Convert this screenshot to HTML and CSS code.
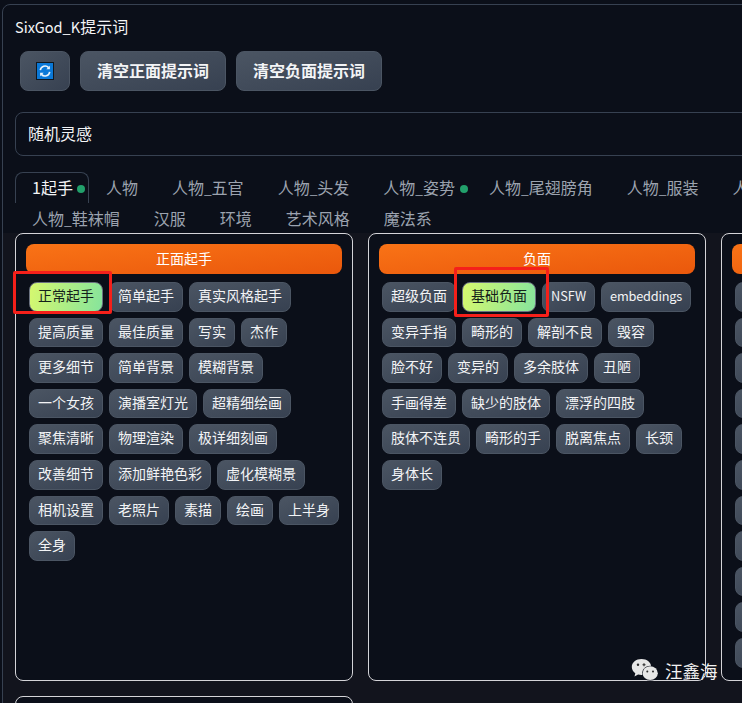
FILE: index.html
```html
<!DOCTYPE html>
<html lang="zh-CN">
<head>
<meta charset="utf-8">
<title>SixGod_K提示词</title>
<link rel="stylesheet" href="styles.css">
</head>
<body>
<div class="panel">
  <div class="title"><span class="latin">SixGod_K</span>提示词</div>
  <div class="toolbar">
    <button class="btn btn-icon" type="button">
      <svg class="refresh" width="18" height="18" viewBox="0 0 18 18" aria-hidden="true">
        <rect x="0.5" y="0.5" width="17" height="17" fill="#0a78d7" stroke="#101820"/>
        <path d="M4.3 8.2A4.8 4.8 0 0 1 12.6 5.6" fill="none" stroke="#eaf4fc" stroke-width="1.6"/>
        <path d="M13.7 9.8A4.8 4.8 0 0 1 5.4 12.4" fill="none" stroke="#eaf4fc" stroke-width="1.6"/>
        <path d="M13.9 3.7V7.2H10.4Z" fill="#eaf4fc"/>
        <path d="M4.1 14.3V10.8H7.6Z" fill="#eaf4fc"/>
      </svg>
    </button>
    <button class="btn" type="button">清空正面提示词</button>
    <button class="btn" type="button">清空负面提示词</button>
  </div>
  <div class="inspire">随机灵感</div>
  <div class="tabs">
    <div class="tab-row">
      <div class="tab tab-active">1起手<span class="dot"></span></div>
      <div class="tab">人物</div>
      <div class="tab">人物<span class="latin">_</span>五官</div>
      <div class="tab">人物<span class="latin">_</span>头发</div>
      <div class="tab">人物<span class="latin">_</span>姿势<span class="dot"></span></div>
      <div class="tab">人物<span class="latin">_</span>尾翅膀角</div>
      <div class="tab">人物<span class="latin">_</span>服装</div>
      <div class="tab">人物<span class="latin">_</span>饰品</div>
    </div>
    <div class="tab-row tab-row-last">
      <div class="tab">人物<span class="latin">_</span>鞋袜帽</div>
      <div class="tab">汉服</div>
      <div class="tab">环境</div>
      <div class="tab">艺术风格</div>
      <div class="tab">魔法系</div>
    </div>
  </div>
  <div class="tab-body">
    <div class="col">
      <div class="col-head">正面起手</div>
      <div class="chips">
        <span class="chip chip-on">正常起手</span><span class="chip">简单起手</span><span class="chip">真实风格起手</span>
        <span class="chip">提高质量</span><span class="chip">最佳质量</span><span class="chip">写实</span><span class="chip">杰作</span>
        <span class="chip">更多细节</span><span class="chip">简单背景</span><span class="chip">模糊背景</span>
        <span class="chip">一个女孩</span><span class="chip">演播室灯光</span><span class="chip">超精细绘画</span>
        <span class="chip">聚焦清晰</span><span class="chip">物理渲染</span><span class="chip">极详细刻画</span>
        <span class="chip">改善细节</span><span class="chip">添加鲜艳色彩</span><span class="chip">虚化模糊景</span>
        <span class="chip">相机设置</span><span class="chip">老照片</span><span class="chip">素描</span><span class="chip">绘画</span><span class="chip">上半身</span>
        <span class="chip">全身</span>
      </div>
    </div>
    <div class="col">
      <div class="col-head">负面</div>
      <div class="chips">
        <span class="chip">超级负面</span><span class="chip chip-on">基础负面</span><span class="chip"><span class="latin">NSFW</span></span><span class="chip"><span class="latin latin-tight">embeddings</span></span>
        <span class="chip">变异手指</span><span class="chip">畸形的</span><span class="chip">解剖不良</span><span class="chip">毁容</span>
        <span class="chip">脸不好</span><span class="chip">变异的</span><span class="chip">多余肢体</span><span class="chip">丑陋</span>
        <span class="chip">手画得差</span><span class="chip">缺少的肢体</span><span class="chip">漂浮的四肢</span>
        <span class="chip">肢体不连贯</span><span class="chip">畸形的手</span><span class="chip">脱离焦点</span><span class="chip">长颈</span>
        <span class="chip">身体长</span>
      </div>
    </div>
    <div class="col">
      <div class="col-head">其他</div>
      <div class="chips chips-stack">
        <span class="chip">提示词</span><span class="chip">提示词</span><span class="chip">提示词</span><span class="chip">提示词</span>
        <span class="chip">提示词</span><span class="chip">提示词</span><span class="chip">提示词</span><span class="chip">提示词</span>
        <span class="chip">提示词</span><span class="chip">提示词</span><span class="chip">提示词</span>
      </div>
    </div>
    <div class="col"></div>
  </div>
</div>

<div class="mark mark-a"></div>
<div class="mark mark-b"></div>

<div class="watermark">
  <svg width="28" height="24" viewBox="0 0 28 24" aria-hidden="true">
    <path d="M10.5 1C5 1 .8 4.500.8 9c0 2.600 1.400 4.700 3.500 6.200L3.500 18.500l3.600-1.900c1.100.3 2.200.5 3.400.5 5.500 0 9.700-3.600 9.700-8.100S16 1 10.500 1z" fill="#e6e6e6"/>
    <ellipse cx="19.200" cy="15.200" rx="8.200" ry="7.400" fill="#0b0f19"/>
    <ellipse cx="19.200" cy="15.200" rx="7.600" ry="6.900" fill="#e6e6e6"/>
    <circle cx="7" cy="6.800" r="1.200" fill="#2b2b2b"/>
    <path d="M13 5.300v3M11.500 6.800h3" stroke="#2b2b2b" stroke-width="1.100"/>
    <circle cx="16.300" cy="13.500" r="1" fill="#2b2b2b"/>
    <circle cx="22" cy="13.500" r="1" fill="#2b2b2b"/>
  </svg>
  <span class="watermark-name">汪鑫海</span>
</div>
</body>
</html>
```

FILE: styles.css
```css
* { box-sizing: border-box; }

html, body {
  margin: 0;
  height: 703px;
  overflow: hidden;
  background: #0b0f19;
}

body {
  position: relative;
  width: 742px;
  font-family: "Noto Sans CJK SC", sans-serif;
  font-size: 16px;
  line-height: 24px;
  color: #f3f4f6;
}

.latin {
  font-size: 0.91em;
  line-height: 1;
}

.latin-tight { letter-spacing: -0.2px; }

.panel {
  width: 1200px;
  margin: 4px 0 0 2px;
  padding: 10px 0 0 12px;
  border: 1px solid #374151;
  border-radius: 8px;
  background: #0b0f19;
}

.title {
  height: 24px;
  line-height: 22px;
}

.toolbar {
  display: flex;
  gap: 10px;
  margin: 12px 0 0 5px;
}

.btn {
  height: 40px;
  padding: 0 16px 2px;
  border: 1px solid #4b5563;
  border-radius: 8px;
  background: linear-gradient(to bottom right, #4b5563, #374151);
  color: #f3f4f6;
  font: 600 16px/24px "Noto Sans CJK SC", sans-serif;
}

.btn-icon {
  display: flex;
  align-items: center;
  justify-content: center;
  width: 50px;
  padding: 0;
}

.inspire {
  height: 44px;
  margin-top: 21px;
  padding: 8px 12px;
  border: 1px solid #374151;
  border-radius: 8px;
}

.tabs { margin-top: 16px; }

.tab-row { display: flex; }

.tab-row-last { margin-bottom: -1px; }

.tab {
  position: relative;
  padding: 2px 16px 4px;
  border: 1px solid transparent;
  border-bottom: 0;
  color: #9ca3af;
  white-space: nowrap;
}

.tab .latin { font-size: 0.86em; }

.tab-active {
  padding-right: 15px;
  border-color: #374151;
  border-radius: 8px 8px 0 0;
  color: #f3f4f6;
}

.dot {
  position: absolute;
  top: 12px;
  right: 3px;
  width: 8px;
  height: 8px;
  border-radius: 50%;
  background: #22a06b;
}

.tab-body {
  display: grid;
  grid-template-columns: repeat(3, 338px);
  grid-auto-rows: 448px;
  gap: 15px;
  margin-left: -12px;
  padding: 0 0 0 12px;
  background: #12141d;
}

.col {
  padding: 10px;
  border: 1px solid #d4d4d8;
  border-radius: 8px;
  background: #0b0f19;
}

.col-head {
  height: 30px;
  border-radius: 8px;
  background: linear-gradient(to bottom right, #f97316, #ea580c);
  color: #fff;
  font-size: 14px;
  line-height: 28px;
  text-align: center;
}

.chips {
  display: flex;
  flex-wrap: wrap;
  gap: 6px;
  margin: 8px 0 0 3px;
}

.chips-stack {
  flex-direction: column;
  flex-wrap: nowrap;
  align-items: flex-start;
}

.chip {
  padding: 3px 8px 5px;
  border: 1px solid #4b5563;
  border-radius: 8px;
  background: linear-gradient(to bottom right, #4b5563, #374151);
  color: #f3f4f6;
  font-size: 14px;
  line-height: 19.6px;
  white-space: nowrap;
}

.chip-on {
  border-color: #6b7280;
  background: linear-gradient(100deg, #d6f86f, #86e49c);
  color: #14201a;
}

.mark {
  position: absolute;
  border: 3px solid #f5201a;
  border-radius: 2px;
}

.mark-a { left: 13px; top: 271px; width: 99px; height: 43px; }

.mark-b { left: 454px; top: 267px; width: 95px; height: 50px; }

.watermark {
  position: absolute;
  left: 631px;
  top: 657px;
  display: flex;
  align-items: center;
  gap: 6px;
  color: #f2f2f2;
  font-size: 17.5px;
  line-height: 24px;
}

.watermark svg { display: block; }

.watermark-name { padding-top: 2px; }
```
